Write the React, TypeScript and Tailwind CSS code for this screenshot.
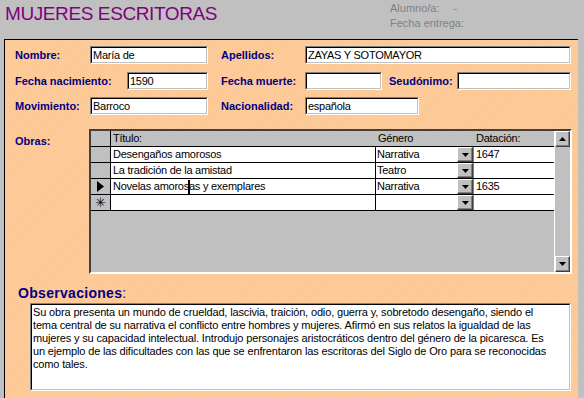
import clsx from "clsx";
import type { ReactNode } from "react";

const label = "text-[11px] font-bold text-[#000080] leading-[13px]";
const txt = "text-[11px] leading-[13px] tracking-[-0.25px] text-black";

function Sunken({ className, children }: { className?: string; children?: ReactNode }) {
  return (
    <div
      className={clsx(
        "border border-t-[#808080] border-l-[#808080] border-b-white border-r-white",
        className,
      )}
    >
      <div className="h-full w-full border border-t-black border-l-black border-b-[#c0c0c0] border-r-[#c0c0c0] bg-white">
        {children}
      </div>
    </div>
  );
}

function Field({ w, value }: { w: string; value?: string }) {
  return (
    <Sunken className={clsx("h-[18px] shrink-0", w)}>
      <div className={clsx(txt, "pl-[1px] pt-[1px] whitespace-nowrap")}>{value}</div>
    </Sunken>
  );
}

function Arrow({ up }: { up?: boolean }) {
  return (
    <svg width="7" height="4" viewBox="0 0 7 4">
      <path d={up ? "M3.5 0 L7 4 L0 4 Z" : "M0 0 L7 0 L3.5 4 Z"} fill="#000" />
    </svg>
  );
}

function RaisedBtn({ className, up }: { className?: string; up?: boolean }) {
  return (
    <div
      className={clsx(
        "flex items-center justify-center bg-[#c0c0c0] border border-t-white border-l-white border-b-[#404040] border-r-[#404040] shadow-[inset_-1px_-1px_0_#808080]",
        className,
      )}
    >
      <Arrow up={up} />
    </div>
  );
}

const rows = [
  { title: "Desengaños amorosos", genero: "Narrativa", fecha: "1647", mark: "" },
  { title: "La tradición de la amistad", genero: "Teatro", fecha: "", mark: "" },
  { title: "Novelas amorosas y exemplares", genero: "Narrativa", fecha: "1635", mark: "current" },
  { title: "", genero: "", fecha: "", mark: "new" },
];

function Grid() {
  return (
    <div className="w-[483px] h-[145px] border-2 border-t-[#404040] border-l-[#404040] border-b-white border-r-white bg-[#c0c0c0] flex">
      <div className="w-[463px] flex flex-col">
        <div className="flex h-[16px] border-b border-black">
          <div className="w-[20px] border-r border-black" />
          <div className={clsx(txt, "w-[264px] pl-[2px] pt-[1px]")}>Título:</div>
          <div className={clsx(txt, "w-[98px] pl-[3px] pt-[1px]")}>Género</div>
          <div className={clsx(txt, "w-[80px] pl-[3px] pt-[1px]")}>Datación:</div>
        </div>
        {rows.map((r, i) => (
          <div key={i} className="flex h-[16px] border-b border-black">
            <div className="w-[20px] border-r border-black bg-[#c0c0c0] flex items-center justify-center">
              {r.mark === "current" && (
                <svg width="7" height="11" viewBox="0 0 7 11">
                  <path d="M0 0 L7 5.5 L0 11 Z" fill="#000" />
                </svg>
              )}
              {r.mark === "new" && (
                <span className="text-[13px] leading-[13px] font-bold font-['DejaVu_Sans',sans-serif]">✳</span>
              )}
            </div>
            <div className={clsx(txt, "w-[265px] bg-white border-r border-black pl-[2px] pt-[1px] whitespace-nowrap")}>
              {r.mark === "current" ? (
                <>
                  Novelas amoros
                  <span className="inline-block w-[2px] h-[14px] bg-black align-top -ml-[1px] -mr-[1px]" />
                  as y exemplares
                </>
              ) : (
                r.title
              )}
            </div>
            <div className={clsx(txt, "w-[81px] bg-white pl-[1px] pt-[1px]")}>{r.genero}</div>
            <RaisedBtn className="w-[16px] h-[15px]" />
            <div className="w-[1px] bg-[#808080]" />
            <div className={clsx(txt, "w-[80px] bg-white pl-[2px] pt-[1px]")}>{r.fecha}</div>
          </div>
        ))}
      </div>
      <div className="w-[16px] flex flex-col border-l border-white bg-[#c0c0c0]">
        <RaisedBtn className="w-[15px] h-[16px]" up />
        <div className="flex-1" />
        <RaisedBtn className="w-[15px] h-[16px]" />
      </div>
    </div>
  );
}

export default function App() {
  const sans = "font-['Liberation_Sans',Arial,sans-serif]";
  return (
    <div className={clsx("w-[584px] h-[398px] overflow-hidden bg-[#c0c0c0]", sans)}>
      <div className="h-[39px] flex">
        <div className="pl-[5px] pt-[3px] w-[390px]">
          <h1 className="text-[19px] leading-[22px] tracking-[-0.4px] text-[#800080]">MUJERES ESCRITORAS</h1>
        </div>
        <div className="pt-[1px] text-[11px] leading-[15px] text-[#808080]">
          <div>
            Alumno/a:<span className="ml-[14px]">-</span>
          </div>
          <div>Fecha entrega:</div>
        </div>
      </div>

      <div className="h-[359px] pl-[4px] pr-[6px]">
        <div className="h-full border-t border-l border-black bg-[#ffcc99] bg-[repeating-linear-gradient(135deg,#ffcc99_0px,#ffcc99_2px,#f9c796_2px,#f9c796_3px)] pt-[6px]">
          <div className="flex items-center pl-[10px]">
            <div className={clsx(label, "w-[75px]")}>Nombre:</div>
            <Field w="w-[118px]" value="María de" />
            <div className={clsx(label, "w-[84px] ml-[13px]")}>Apellidos:</div>
            <Field w="w-[266px]" value="ZAYAS Y SOTOMAYOR" />
          </div>
          <div className="flex items-center pl-[10px] mt-[8px]">
            <div className={clsx(label, "w-[112px]")}>Fecha nacimiento:</div>
            <Field w="w-[81px]" value="1590" />
            <div className={clsx(label, "w-[84px] ml-[13px]")}>Fecha muerte:</div>
            <Field w="w-[77px]" />
            <div className={clsx(label, "w-[68px] ml-[7px]")}>Seudónimo:</div>
            <Field w="w-[114px]" />
          </div>
          <div className="flex items-center pl-[10px] mt-[7px]">
            <div className={clsx(label, "w-[75px]")}>Movimiento:</div>
            <Field w="w-[118px]" value="Barroco" />
            <div className={clsx(label, "w-[84px] ml-[13px]")}>Nacionalidad:</div>
            <Field w="w-[114px]" value="española" />
          </div>

          <div className="flex items-start pl-[10px] mt-[14px]">
            <div className={clsx(label, "w-[74px] pt-[6px]")}>Obras:</div>
            <Grid />
          </div>

          <div className="pl-[13px] mt-[11px] text-[14px] leading-[16px] tracking-[0.3px] text-[#000080]">
            <span className="font-bold">Observaciones</span>:
          </div>
          <Sunken className="ml-[25px] mt-[2px] w-[541px] h-[88px]">
            <div className="text-[11px] leading-[13px] tracking-[-0.15px] text-black pl-[1px] pt-[1px] whitespace-nowrap">
              <div>Su obra presenta un mundo de crueldad, lascivia, traición, odio, guerra y, sobretodo desengaño, siendo el</div>
              <div>tema central de su narrativa el conflicto entre hombres y mujeres. Afirmó en sus relatos la igualdad de las</div>
              <div>mujeres y su capacidad intelectual. Introdujo personajes aristocráticos dentro del género de la picaresca. Es</div>
              <div>un ejemplo de las dificultades con las que se enfrentaron las escritoras del Siglo de Oro para se reconocidas</div>
              <div>como tales.</div>
            </div>
          </Sunken>
        </div>
      </div>
    </div>
  );
}
